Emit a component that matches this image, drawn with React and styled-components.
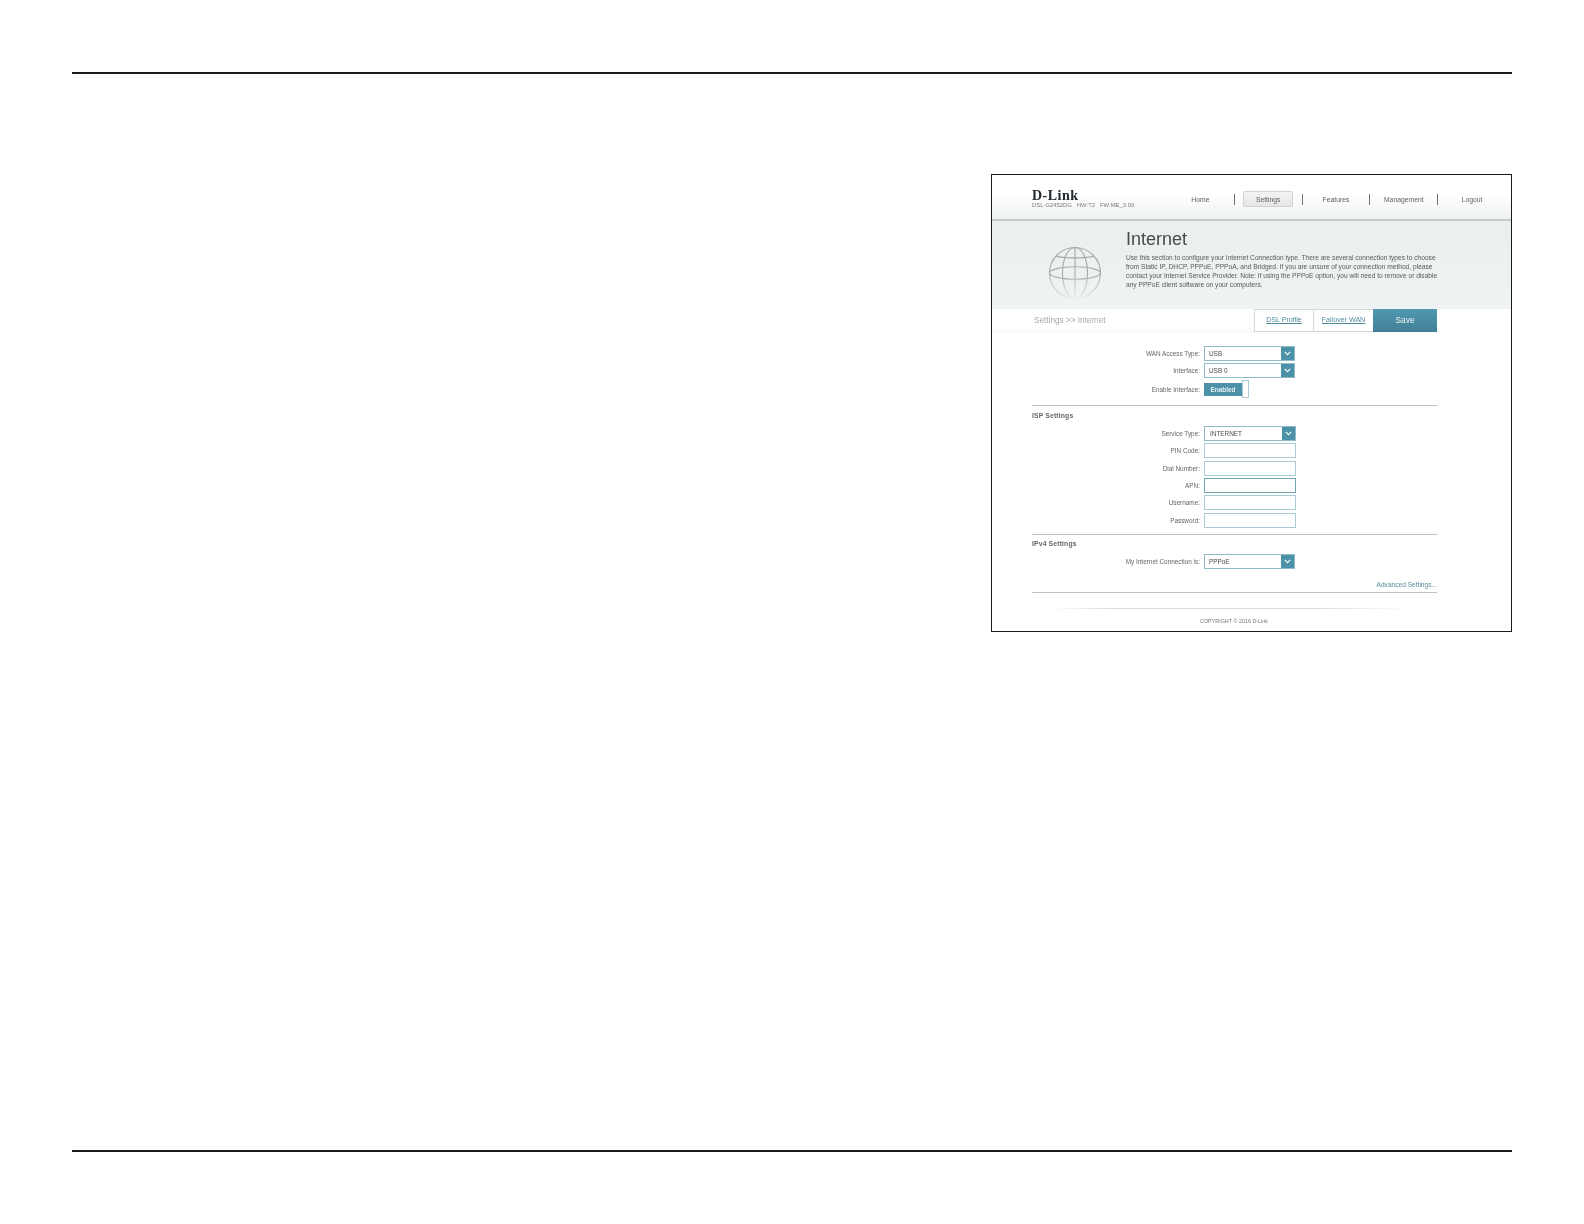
import React from 'react';
import styled, { createGlobalStyle } from 'styled-components';

const GlobalStyle = createGlobalStyle`
  html, body {
    margin: 0;
    padding: 0;
    background: #fff;
    font-family: "Liberation Sans", Arial, sans-serif;
  }
`;

const NAV_ITEMS = ['Home', 'Settings', 'Features', 'Management', 'Logout'];

const DESCRIPTION = [
  'Use this section to configure your Internet Connection type. There are several connection types to choose',
  'from Static IP, DHCP, PPPoE, PPPoA, and Bridged. If you are unsure of your connection method, please',
  'contact your Internet Service Provider. Note: If using the PPPoE option, you will need to remove or disable',
  'any PPPoE client software on your computers.',
];

const Globe = () => (
  <GlobeSvg viewBox="0 0 56 56">
    <defs>
      <linearGradient id="globeFade" gradientUnits="userSpaceOnUse" x1="0" y1="0" x2="0" y2="56">
        <stop offset="0" stopColor="#a4aaaa" />
        <stop offset="0.55" stopColor="#a9afaf" />
        <stop offset="1" stopColor="#edf0f0" />
      </linearGradient>
    </defs>
    <g fill="none" stroke="url(#globeFade)" strokeWidth="1.2">
      <circle cx="28" cy="28" r="26.4" />
      <ellipse cx="28" cy="28" rx="13" ry="26.4" />
      <ellipse cx="28" cy="28" rx="26.4" ry="6.5" />
      <path d="M28 1.6V54.4" />
      <path d="M8 10.5C16 13 40 13 48 10.5" />
    </g>
  </GlobeSvg>
);

const Chevron = () => (
  <svg width="7" height="5" viewBox="0 0 7 5">
    <path d="M0.8 0.9L3.5 3.6L6.2 0.9" fill="none" stroke="#fff" strokeWidth="1.1" />
  </svg>
);

const SelectField = ({ value, wide }) => (
  <SelectBox $wide={wide}>
    <SelectValue $wide={wide}>{value}</SelectValue>
    <SelectArrow>
      <Chevron />
    </SelectArrow>
  </SelectBox>
);

const FormRow = ({ label, gap, children }) => (
  <Row $gap={gap}>
    <RowLabel>{label}</RowLabel>
    {children}
  </Row>
);

const App = () => (
  <Page>
    <GlobalStyle />
    <Rule />
    <Frame>
      <Shot>
        <Header>
          <Brand>
            <Logo>D-Link</Logo>
            <Version>DSL-G2452DG&nbsp;&nbsp;&nbsp;HW:T2&nbsp;&nbsp;&nbsp;FW:ME_3.00</Version>
          </Brand>
          <Nav>
            {NAV_ITEMS.map((item, i) => (
              <NavCell key={item} $last={i === NAV_ITEMS.length - 1}>
                <NavItem $active={item === 'Settings'}>{item}</NavItem>
              </NavCell>
            ))}
          </Nav>
        </Header>
        <Hero>
          <GlobeWrap>
            <Globe />
          </GlobeWrap>
          <HeroText>
            <HeroTitle>Internet</HeroTitle>
            {DESCRIPTION.map(line => (
              <HeroLine key={line}>{line}</HeroLine>
            ))}
          </HeroText>
        </Hero>
        <Toolbar>
          <Crumb>Settings &gt;&gt; Internet</Crumb>
          <TabLink $width={59}>DSL Profile</TabLink>
          <TabLink $width={60}>Failover WAN</TabLink>
          <SaveButton>Save</SaveButton>
        </Toolbar>
        <Content>
          <Group>
            <FormRow label="WAN Access Type:">
              <SelectField value="USB" />
            </FormRow>
            <FormRow label="Interface:" gap={2}>
              <SelectField value="USB 0" />
            </FormRow>
            <FormRow label="Enable Interface:" gap={2}>
              <Toggle>
                <ToggleOn>Enabled</ToggleOn>
                <ToggleKnob />
              </Toggle>
            </FormRow>
          </Group>
          <Divider $top={7} />
          <SectionTitle>ISP Settings</SectionTitle>
          <Group>
            <FormRow label="Service Type:">
              <SelectField value="INTERNET" wide />
            </FormRow>
            <FormRow label="PIN Code:" gap={2}><TextField /></FormRow>
            <FormRow label="Dial Number:" gap={3}><TextField /></FormRow>
            <FormRow label="APN:" gap={2}><TextField $dark /></FormRow>
            <FormRow label="Username:" gap={2}><TextField /></FormRow>
            <FormRow label="Password:" gap={3}><TextField /></FormRow>
          </Group>
          <Divider $top={6} />
          <SectionTitle $top={4}>IPv4 Settings</SectionTitle>
          <Group>
            <FormRow label="My Internet Connection is:">
              <SelectField value="PPPoE" />
            </FormRow>
          </Group>
          <AdvancedLink>Advanced Settings...</AdvancedLink>
          <Divider $top={3} />
        </Content>
        <FooterLine />
        <Copyright>COPYRIGHT © 2016 D-Link</Copyright>
      </Shot>
    </Frame>
    <BottomRule />
  </Page>
);

export default App;

const Page = styled.div`
  width: 1440px;
  height: 1224px;
  margin: 0 0 0 72px;
  padding-top: 72px;
  box-sizing: border-box;
`;

const Rule = styled.div`
  height: 2px;
  background: #1c1c1c;
`;

const BottomRule = styled(Rule)`
  margin-top: 518px;
`;

const Frame = styled.div`
  box-sizing: border-box;
  width: 521px;
  height: 458px;
  margin: 100px 0 0 auto;
  border: 1px solid #1a1a1a;
  background: #fff;
  overflow: hidden;
`;

// the picture inside the frame is a soft, scaled-down capture
const Shot = styled.div`
  height: 100%;
  color: #5c5c5c;
  filter: blur(0.3px);
`;

const Header = styled.header`
  box-sizing: border-box;
  height: 46px;
  display: flex;
  align-items: flex-start;
  justify-content: space-between;
  padding: 15px 0 0 40px;
  background: linear-gradient(#fff 0%, #fff 45%, #eef1f1 100%);
  border-bottom: 2px solid #c6caca;
`;

const Brand = styled.div`
  display: flex;
  flex-direction: column;
`;

const Logo = styled.div`
  font-family: "Liberation Serif", "Times New Roman", serif;
  font-weight: 700;
  font-size: 14px;
  line-height: 12px;
  letter-spacing: 0.5px;
  color: #23282d;
`;

const Version = styled.div`
  margin-top: 0;
  font-size: 5.9px;
  line-height: 7px;
  color: #7c7c7c;
  white-space: nowrap;
`;

const Nav = styled.nav`
  display: flex;
  align-items: center;
  width: 344px;
  height: 16px;
  margin-top: 1px;
`;

const NavCell = styled.div`
  box-sizing: border-box;
  width: 67.8px;
  height: 11px;
  display: flex;
  align-items: center;
  justify-content: center;
  border-right: ${p => (p.$last ? 'none' : '1px solid #6d7272')};
`;

const NavItem = styled.div`
  box-sizing: border-box;
  width: 50px;
  flex: none;
  height: 16px;
  line-height: 15px;
  font-size: 6.8px;
  text-align: center;
  color: #5f5f5f;
  background: ${p => (p.$active ? 'linear-gradient(#f4f4f4, #e6e6e6)' : 'transparent')};
  border: 1px solid ${p => (p.$active ? '#d2d4d4' : 'transparent')};
  border-radius: 2px 2px 0 0;
`;

const Hero = styled.section`
  height: 87px;
  display: flex;
  background: linear-gradient(#eaeeee 0%, #f0f3f3 100%);
  border-bottom: 1px solid #f2f3f3;
`;

const GlobeWrap = styled.div`
  width: 134px;
  flex: none;
  padding: 25px 0 0 56px;
  box-sizing: border-box;
`;

const GlobeSvg = styled.svg`
  display: block;
  width: 54px;
  height: 54px;
`;

const HeroText = styled.div`
  padding-top: 8px;
`;

const HeroTitle = styled.h1`
  margin: 0 0 3px;
  font-weight: 400;
  font-size: 18px;
  line-height: 21px;
  color: #4b4b45;
`;

const HeroLine = styled.div`
  font-size: 6.64px;
  line-height: 9px;
  color: #5a5a5a;
  white-space: nowrap;
`;

const Toolbar = styled.div`
  box-sizing: border-box;
  height: 24px;
  display: flex;
  align-items: stretch;
  padding-left: 42px;
  width: 445px;
  background: linear-gradient(#fff 70%, #f8f9f9 100%);
`;

const Crumb = styled.div`
  flex: 1;
  font-size: 8.2px;
  line-height: 23px;
  color: #a8a8a8;
`;

const TabLink = styled.a`
  box-sizing: border-box;
  width: ${p => p.$width}px;
  height: 23px;
  line-height: 21px;
  text-align: center;
  font-size: 7.1px;
  color: #4f8c9e;
  text-decoration: underline;
  background: #fff;
  border: 1px solid #d4d8d8;
  border-right: none;
`;

const SaveButton = styled.button`
  width: 64px;
  height: 23px;
  padding: 0 0 1px;
  border: none;
  font-family: inherit;
  font-size: 8.4px;
  color: #f2f6f7;
  background: linear-gradient(#4f99b0, #427f96);
`;

const Content = styled.main`
  width: 405px;
  margin-left: 40px;
  padding-top: 13px;
`;

const Group = styled.div`
  display: flex;
  flex-direction: column;
`;

const Row = styled.div`
  display: flex;
  align-items: center;
  margin-top: ${p => p.$gap || 0}px;
`;

const RowLabel = styled.div`
  width: 168px;
  margin-right: 4px;
  flex: none;
  text-align: right;
  font-size: 6.4px;
  line-height: 15px;
  color: #666;
`;

const SelectBox = styled.div`
  box-sizing: border-box;
  width: ${p => (p.$wide ? 92 : 91)}px;
  height: 15px;
  display: flex;
  align-items: stretch;
  border: 1px solid #8fbac7;
`;

const SelectValue = styled.div`
  flex: 1;
  padding-left: ${p => (p.$wide ? 5 : 4)}px;
  font-size: 6.4px;
  line-height: 13px;
  color: #4a4a4a;
`;

const SelectArrow = styled.div`
  width: 13px;
  display: flex;
  align-items: center;
  justify-content: center;
  background: #4b91a8;
`;

const TextField = styled.div`
  box-sizing: border-box;
  width: 92px;
  height: 15px;
  border: 1px solid ${p => (p.$dark ? '#6fa3b2' : '#a9cbd4')};
`;

const Toggle = styled.div`
  display: flex;
  align-items: center;
  height: 18px;
`;

const ToggleOn = styled.div`
  width: 38px;
  height: 13px;
  line-height: 13px;
  text-align: center;
  font-size: 6.4px;
  font-weight: 700;
  color: #e9f1f3;
  background: #4b91a8;
`;

const ToggleKnob = styled.div`
  box-sizing: border-box;
  width: 7px;
  height: 18px;
  background: #fff;
  border: 1px solid #a9cbd4;
`;

const Divider = styled.div`
  height: 1px;
  margin-top: ${p => p.$top}px;
  background: #bfc2c2;
`;

const SectionTitle = styled.h2`
  margin: ${p => p.$top || 5}px 0 5px;
  font-size: 6.8px;
  font-weight: 700;
  line-height: 10px;
  letter-spacing: 0.15px;
  color: #666;
`;

const AdvancedLink = styled.a`
  display: block;
  margin-top: 11px;
  text-align: right;
  font-size: 6.6px;
  line-height: 9px;
  color: #5b8b99;
`;

const FooterLine = styled.div`
  width: 360px;
  height: 1px;
  margin: 15px 0 0 60px;
  background: linear-gradient(90deg, #fff, #dedede 15%, #dedede 75%, #fff);
`;

const Copyright = styled.div`
  margin: 8px 0 0 208px;
  font-size: 5.4px;
  line-height: 8px;
  color: #777;
`;
